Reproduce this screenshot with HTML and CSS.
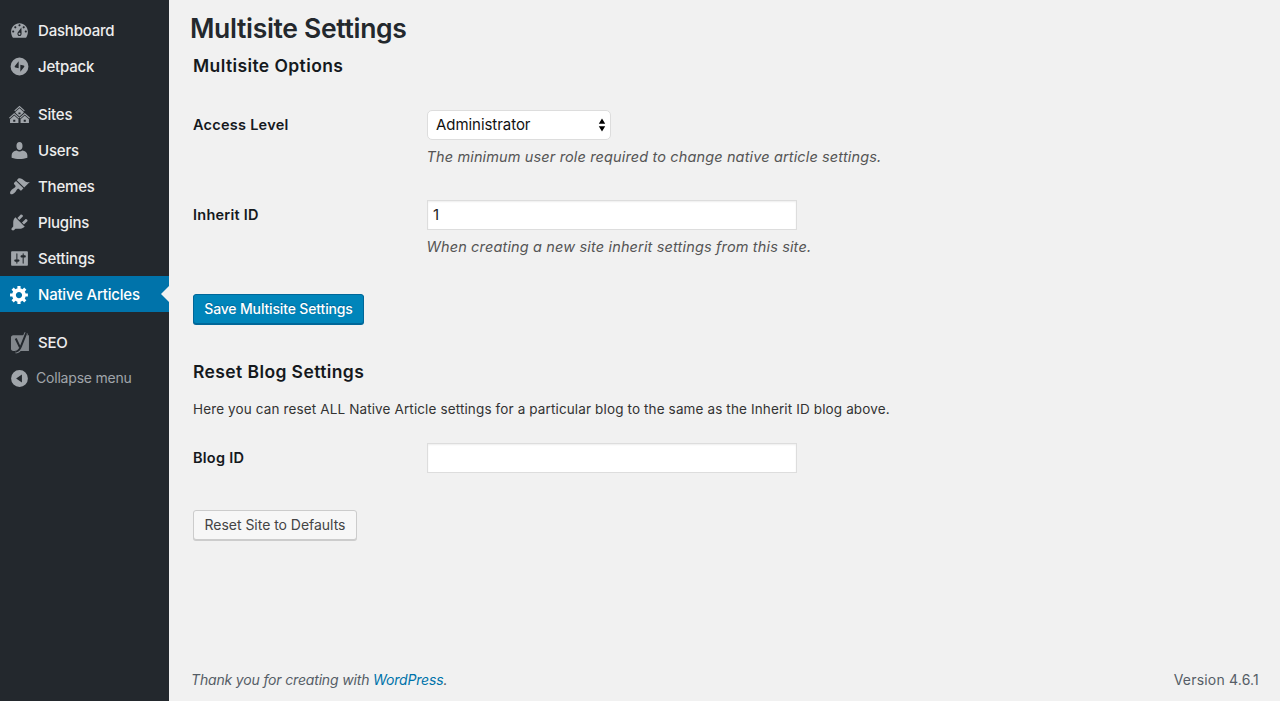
FILE: index.html
```
<!DOCTYPE html>
<html lang="en">
<head>
<meta charset="utf-8">
<title>Multisite Settings</title>
<link rel="stylesheet" href="styles.css">
</head>
<body>
<div class="layout">
  <nav class="menu">
    <a class="item"><svg class="icon" viewBox="0 0 20 20"><path fill-rule="evenodd" d="M3.76 17h12.48c1.1-1.37 1.76-3.6 1.76-5.5C18 6.6 14.420 3 10 3s-8 3.600-8 8.500c0 1.900.660 4.130 1.760 5.500zM10 4c.55 0 1 .45 1 1s-.45 1-1 1-1-.45-1-1 .45-1 1-1zM6 6c.55 0 1 .45 1 1s-.45 1-1 1-1-.45-1-1 .45-1 1-1zm8 0c.55 0 1 .45 1 1s-.45 1-1 1-1-.45-1-1 .45-1 1-1zm-2.200 1.200l.2 5.800c0 1.100-.9 2.300-2 2.300s-2-1.200-2-2.300c0-.6.24-1.100.63-1.500zM4 10c.55 0 1 .45 1 1s-.45 1-1 1-1-.45-1-1 .45-1 1-1zm12 0c.55 0 1 .45 1 1s-.45 1-1 1-1-.45-1-1 .45-1 1-1zm-5 3.200c0-.55-.45-1-1-1s-1 .45-1 1 .45 1 1 1 1-.45 1-1z"/></svg><span>Dashboard</span></a>
    <a class="item"><svg class="icon" viewBox="0 0 20 20"><path fill-rule="evenodd" d="M10 1.500a8.500 8.500 0 1 0 0 17 8.500 8.500 0 0 0 0-17zM9.200 5v6.600l-3.100-.7c-.8-.2-.9-.7-.5-1.300zM10.800 15V8.400l3.100.7c.8.2.9.7.5 1.300z"/></svg><span>Jetpack</span></a>
    <a class="item gap"><svg class="icon" viewBox="0 0 20 20"><path d="M14.270 6.870L10 3.140 5.730 6.870 5 6.140l5-4.380 5 4.380zM14 8.420l-4.050 3.430L6 8.380v-.74l4-3.500 4 3.500v.78zM11 9.700V8H9v1.700h2zm-1.730 4.030L5 10 .73 13.730 0 13l5-4.380L10 13zm10 0L15 10l-4.270 3.730L10 13l5-4.380L20 13zM5 11l4 3.500V18H1v-3.500zm10 0l4 3.500V18h-8v-3.500zm-9 6v-2H4v2h2zm10 0v-2h-2v2h2z"/></svg><span>Sites</span></a>
    <a class="item"><svg class="icon" viewBox="0 0 20 20"><path d="M10 9.500c-2 0-2.900-2-2.900-3.900C7.100 3.500 8.200 2 10 2s2.900 1.500 2.900 3.600c0 1.900-.9 3.900-2.900 3.900zM7.300 10c.8.7 1.700 1 2.700 1s1.900-.3 2.700-1c2.800.2 4.800 2 4.800 4.500V17c-2.300.8-4.900 1.200-7.500 1.200S4.800 17.800 2.500 17v-2.500c0-2.500 2-4.300 4.800-4.500z"/></svg><span>Users</span></a>
    <a class="item"><svg class="icon" viewBox="0 0 20 20"><path d="M14.480 11.060L7.410 3.990l1.500-1.500c.5-.56 2.300-.47 3.510.32 1.210.8 1.430 1.280 2.910 2.100 1.180.64 2.450 1.260 4.450.85zm-.71.710L6.700 4.700 4.930 6.470c-.39.39-.39 1.020 0 1.410l1.060 1.060c.39.39.39 1.030 0 1.420-.6.6-1.430 1.110-2.210 1.690-.35.26-.7.53-1.010.84C1.430 14.230.4 16.080 1.400 17.070c.99 1 2.840-.03 4.180-1.360.31-.31.58-.66.85-1.020.57-.78 1.080-1.610 1.690-2.210.39-.39 1.020-.39 1.410 0l1.060 1.060c.39.39 1.020.39 1.410 0z"/></svg><span>Themes</span></a>
    <a class="item"><svg class="icon" viewBox="0 0 20 20"><path d="M13.110 4.360L9.870 7.600 8 5.730l3.240-3.240c.35-.34 1.050-.2 1.560.32.52.51.66 1.210.31 1.550zm-8 1.770l.91-1.120 9.010 9.010-1.190.84c-.71.71-2.630 1.160-3.820 1.160H6.140L4.900 17.260c-.59.59-1.540.59-2.120 0-.59-.58-.59-1.530 0-2.120l1.240-1.240v-3.880c0-1.130.4-3.190 1.090-3.890zm7.260 3.970l3.240-3.240c.34-.35 1.040-.21 1.550.31.52.51.66 1.210.31 1.550l-3.240 3.250z"/></svg><span>Plugins</span></a>
    <a class="item"><svg class="icon" viewBox="0 0 20 20"><path d="M18 16V4c0-.55-.45-1-1-1H3c-.55 0-1 .45-1 1v12c0 .55.45 1 1 1h14c.55 0 1-.45 1-1zM8 11h1c.55 0 1 .45 1 1s-.45 1-1 1H8v1.500c0 .28-.22.5-.5.5s-.5-.22-.5-.5V13H6c-.55 0-1-.45-1-1s.45-1 1-1h1V5.500c0-.28.22-.5.5-.5s.5.22.5.5V11zm5-2h-1c-.55 0-1-.45-1-1s.45-1 1-1h1V5.500c0-.28.22-.5.5-.5s.5.22.5.5V7h1c.55 0 1 .45 1 1s-.45 1-1 1h-1v5.500c0 .28-.22.5-.5.5s-.5-.22-.5-.5V9z"/></svg><span>Settings</span></a>
    <a class="item current"><svg class="icon" viewBox="0 0 20 20"><path d="M18 12h-2.180c-.17.7-.44 1.350-.81 1.930l1.540 1.540-2.100 2.100-1.540-1.540c-.58.36-1.230.63-1.910.79V19H8v-2.180c-.68-.16-1.330-.43-1.910-.79l-1.540 1.540-2.120-2.120 1.540-1.540c-.36-.58-.63-1.230-.79-1.910H1V9.030h2.170c.16-.7.44-1.350.8-1.940L2.430 5.550l2.100-2.100 1.540 1.540c.58-.37 1.240-.64 1.930-.81V2h3v2.180c.68.16 1.330.43 1.910.79l1.540-1.540 2.120 2.120-1.540 1.540c.36.59.64 1.240.8 1.940H18V12zm-8.500 1.500c1.660 0 3-1.340 3-3s-1.340-3-3-3-3 1.340-3 3 1.340 3 3 3z"/></svg><span>Native Articles</span></a>
    <a class="item gap"><svg class="icon seo" viewBox="0 0 20 20"><path class="box" d="M4 3.200h15V18H4c-1.200 0-2.100-.9-2.100-2.100V5.300c0-1.200.9-2.100 2.100-2.100z"/><path class="rim" d="M16.400 1l-5.300 13.300c-.9 2.600-2.200 4.100-5 4.500"/><path class="stem" d="M16.400 1l-5.300 13.300c-.9 2.600-2.200 4.100-5 4.500M6.400 6.200l3.900 8.200"/></svg><span>SEO</span></a>
    <a class="item collapse"><svg class="icon" viewBox="0 0 20 20"><path fill-rule="evenodd" d="M10 2a8 8 0 1 0 0 16 8 8 0 0 0 0-16zM12.300 6.200v7.600L6.800 10z"/></svg><span>Collapse menu</span></a>
  </nav>
  <main class="content">
    <h1>Multisite Settings</h1>
    <h2>Multisite Options</h2>
    <div class="row access">
      <label>Access Level</label>
      <div class="field">
        <div class="select"><span>Administrator</span><svg width="8" height="14" viewBox="0 0 8 14"><path d="M4 .5L7.200 5.700H.8zM4 13.500L.8 8.300h6.400z"/></svg></div>
        <p class="description">The minimum user role required to change native article settings.</p>
      </div>
    </div>
    <div class="row inherit">
      <label>Inherit ID</label>
      <div class="field">
        <div class="input">1</div>
        <p class="description when">When creating a new site inherit settings from this site.</p>
      </div>
    </div>
    <button class="button primary">Save Multisite Settings</button>
    <h2 class="reset-title">Reset Blog Settings</h2>
    <p class="intro">Here you can reset ALL Native Article settings for a particular blog to the same as the Inherit ID blog above.</p>
    <div class="row blog">
      <label>Blog ID</label>
      <div class="field"><div class="input"></div></div>
    </div>
    <button class="button">Reset Site to Defaults</button>
    <footer>
      <span class="thanks">Thank you for creating with <a>WordPress</a>.</span>
      <span class="version">Version 4.6.1</span>
    </footer>
  </main>
</div>
</body>
</html>
```

FILE: styles.css
```
* { box-sizing: border-box; }
body { margin: 0; background: #f1f1f1; color: #444; font-family: Inter, "Open Sans", sans-serif; font-size: 14px; }
h1, h2, p { margin: 0; }
.layout { display: flex; height: 701px; overflow: hidden; }
.menu { width: 169px; flex: none; padding-top: 12px; background: #23282d; }
.item { position: relative; display: flex; align-items: center; height: 36px; padding-left: 8.5px; color: #eee; font-size: 15px; font-weight: 500; letter-spacing: -0.2px; line-height: 20px; white-space: nowrap; }
.item span { padding-top: 1px; }
.icon { width: 21px; height: 21px; margin-right: 8.5px; flex: none; fill: #a0a5aa; }
.gap { margin-top: 12px; }
.current { background: #0073aa; color: #fff; }
.current .icon { fill: #fff; }
.current::after { content: ""; position: absolute; right: 0; top: 10px; border: 8px solid transparent; border-left: 0; border-right-color: #f1f1f1; }
.seo { overflow: visible; }
.seo .box { fill: #82878c; }
.seo .rim { fill: none; stroke: #82878c; stroke-width: 3.6; }
.seo .stem { fill: none; stroke: #23282d; stroke-width: 1.9; }
.collapse { color: #a0a5aa; font-size: 14px; font-weight: 400; }
.collapse span { padding-top: 0; }
.collapse .icon { margin-right: 6.5px; }
.content { flex: 1; display: flex; flex-direction: column; align-items: flex-start; padding: 11px 21px 0 24px; }
h1 { margin-left: -3px; color: #23282d; font-size: 26.5px; font-weight: 600; line-height: 34px; letter-spacing: -0.32px; }
h2 { margin-top: 9px; color: #15191d; font-size: 17.5px; font-weight: 600; line-height: 24px; letter-spacing: 0.4px; }
.row { display: flex; }
.row label { width: 234px; color: #15191d; font-size: 14.5px; font-weight: 600; line-height: 30px; letter-spacing: 0.25px; }
.access { margin-top: 32px; height: 90px; }
.inherit { height: 94px; }
.select { display: flex; align-items: center; justify-content: space-between; width: 184px; height: 30px; padding: 0 4px 0 8px; border: 1px solid #ddd; border-radius: 5px; background: #fff; color: #111; font-size: 15px; line-height: 27px; letter-spacing: -0.05px; }
.select span { padding-bottom: 1px; }
.input { width: 370px; height: 30px; padding: 0 5px; border: 1px solid #ddd; background: #fff; box-shadow: inset 0 1px 2px rgba(0,0,0,.07); color: #222; font-size: 15px; line-height: 28px; }
.description { margin-top: 6px; margin-left: -0.5px; color: #555; font-size: 14.5px; font-style: italic; line-height: 22px; letter-spacing: 0.135px; }
.when { letter-spacing: 0.15px; }
.button { width: 164px; height: 30px; padding: 0; border: 1px solid #ccc; border-radius: 3px; background: #f7f7f7; box-shadow: 0 1px 0 #ccc; color: #444; font: 400 14px/28px Inter, sans-serif; letter-spacing: -0.03px; white-space: nowrap; text-align: center; }
.primary { width: 171px; border-color: #006799; background: #0085ba; box-shadow: 0 1px 0 #006799; color: #fff; font-weight: 500; letter-spacing: -0.15px; text-shadow: 0 -1px 1px #006799; }
.reset-title { margin-top: 36px; }
.intro { margin-top: 15px; font-size: 13.5px; line-height: 20px; letter-spacing: 0.13px; color: #333; }
.blog { margin-top: 24px; height: 67px; }
.blog label { line-height: 29px; }
footer { display: flex; justify-content: space-between; align-self: stretch; margin-top: auto; margin-left: -2px; height: 31px; line-height: 20px; color: #555d66; }
.thanks { font-style: italic; letter-spacing: -0.165px; }
.thanks a { color: #0073aa; }
.version { letter-spacing: 0.2px; }
```
